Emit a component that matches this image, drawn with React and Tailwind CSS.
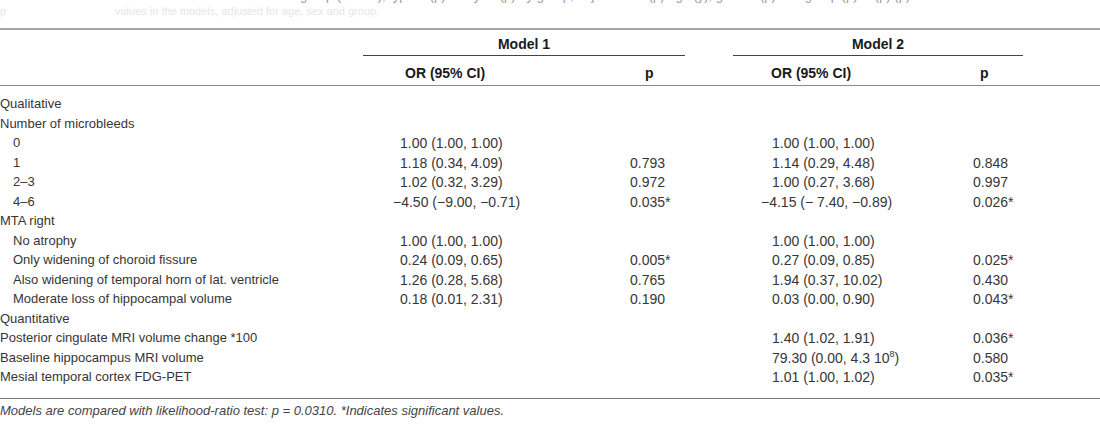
const rows = [
  { label: "Qualitative" },
  { label: "Number of microbleeds" },
  { label: "0", indent: true, or1: "1.00 (1.00, 1.00)", or2: "1.00 (1.00, 1.00)" },
  { label: "1", indent: true, or1: "1.18 (0.34, 4.09)", p1: "0.793", or2: "1.14 (0.29, 4.48)", p2: "0.848" },
  { label: "2–3", indent: true, or1: "1.02 (0.32, 3.29)", p1: "0.972", or2: "1.00 (0.27, 3.68)", p2: "0.997" },
  { label: "4–6", indent: true, neg: true, or1: "−4.50 (−9.00, −0.71)", p1: "0.035*", or2: "−4.15 (− 7.40, −0.89)", p2: "0.026*" },
  { label: "MTA right" },
  { label: "No atrophy", indent: true, or1: "1.00 (1.00, 1.00)", or2: "1.00 (1.00, 1.00)" },
  { label: "Only widening of choroid fissure", indent: true, or1: "0.24 (0.09, 0.65)", p1: "0.005*", or2: "0.27 (0.09, 0.85)", p2: "0.025*" },
  { label: "Also widening of temporal horn of lat. ventricle", indent: true, or1: "1.26 (0.28, 5.68)", p1: "0.765", or2: "1.94 (0.37, 10.02)", p2: "0.430" },
  { label: "Moderate loss of hippocampal volume", indent: true, or1: "0.18 (0.01, 2.31)", p1: "0.190", or2: "0.03 (0.00, 0.90)", p2: "0.043*" },
  { label: "Quantitative" },
  { label: "Posterior cingulate MRI volume change *100", or2: "1.40 (1.02, 1.91)", p2: "0.036*" },
  { label: "Baseline hippocampus MRI volume", or2: <>79.30 (0.00, 4.3 10<sup className="text-[9px] -top-[6px]">8</sup>)</>, p2: "0.580" },
  { label: "Mesial temporal cortex FDG-PET", or2: "1.01 (1.00, 1.02)", p2: "0.035*" },
];

export default function App() {
  return (
    <div className="w-[1100px] h-[430px] overflow-hidden bg-white text-[#363636] font-['Liberation_Sans',Arial,sans-serif]">
      {/* cut-off caption above the table */}
      <div className="h-[28px] overflow-hidden">
        <p className="-mt-[12px] pl-[300px] text-[13px] leading-[15px] text-[#999] whitespace-nowrap">
          group (n = 39), typical (p) analysis (p) by group, adjusted for (p) age (y), gender (p) and group (p) in (p) (p)
        </p>
        <p className="mt-[1px] text-[11px] leading-[14px] text-[#e6e6e6] whitespace-nowrap">
          <span className="inline-block w-[115px]">p</span>
          values in the models, adjusted for age, sex and group.
        </p>
      </div>

      <table className="w-full border-collapse border-t-2 border-[#a6a6a6]">
        <colgroup>
          <col className="w-[363px]" />
          <col className="w-[197px]" />
          <col className="w-[173px]" />
          <col className="w-[207px]" />
          <col className="w-[160px]" />
        </colgroup>
        <thead className="text-[14px] font-bold text-[#1a1a1a]">
          <tr>
            <th></th>
            <th colSpan={2} className="p-0 font-bold">
              <div className="mr-[48px] border-b border-[#444] pt-[6px] pb-[3px] text-center leading-[16px]">Model 1</div>
            </th>
            <th colSpan={2} className="p-0 font-bold">
              <div className="mr-[77px] border-b border-[#444] pt-[6px] pb-[3px] text-center leading-[16px]">Model 2</div>
            </th>
          </tr>
          <tr className="border-b border-[#8a8a8a]">
            <th></th>
            <th className="pl-[42px] pt-[9px] pb-[4px] text-left leading-[16px] font-bold">OR (95% CI)</th>
            <th className="pl-[85px] pt-[9px] pb-[4px] text-left leading-[16px] font-bold">p</th>
            <th className="pl-[38px] pt-[9px] pb-[4px] text-left leading-[16px] font-bold">OR (95% CI)</th>
            <th className="pl-[40px] pt-[9px] pb-[4px] text-left leading-[16px] font-bold">p</th>
          </tr>
        </thead>
        <tbody className="border-b border-[#777]">
          <tr className="h-[9px]"><td colSpan={5}></td></tr>
          {rows.map((r, i) => (
            <tr key={i} className="h-[19.5px] leading-[16px]">
              <td className={`text-[13px] whitespace-nowrap ${r.indent ? "pl-[13px]" : ""}`}>{r.label}</td>
              <td className={`text-[14px] whitespace-nowrap ${r.neg ? "pl-[30px]" : "pl-[37px]"}`}>{r.or1}</td>
              <td className="text-[14px] pl-[70px]">{r.p1}</td>
              <td className={`text-[14px] whitespace-nowrap ${r.neg ? "pl-[28px]" : "pl-[39px]"}`}>{r.or2}</td>
              <td className="text-[14px] pl-[33px]">{r.p2}</td>
            </tr>
          ))}
          <tr className="h-[11px]"><td colSpan={5}></td></tr>
        </tbody>
      </table>

      <p className="pt-[4px] text-[13px] italic text-[#444] leading-[16px]">
        Models are compared with likelihood-ratio test: p = 0.0310. *Indicates significant values.
      </p>
    </div>
  );
}
